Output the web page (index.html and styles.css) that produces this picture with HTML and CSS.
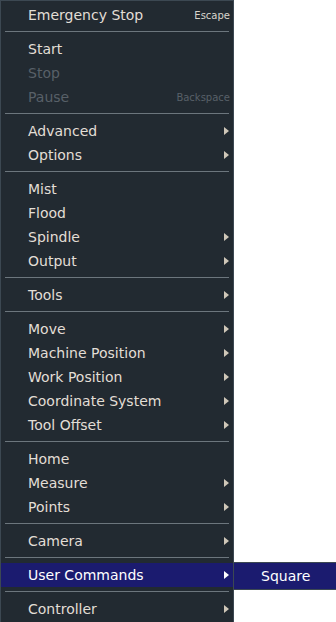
FILE: index.html
```html
<!DOCTYPE html>
<html lang="en">
<head>
    <meta charset="UTF-8">
    <title>Machine Menu</title>
    <link rel="stylesheet" href="styles.css">
</head>
<body>
    <div class="menu">
        <div class="item">Emergency Stop<span class="shortcut">Escape</span></div>
        <div class="sep"></div>

        <div class="item">Start</div>
        <div class="item disabled">Stop</div>
        <div class="item disabled">Pause<span class="shortcut">Backspace</span></div>
        <div class="sep"></div>

        <div class="item sub">Advanced</div>
        <div class="item sub">Options</div>
        <div class="sep"></div>

        <div class="item">Mist</div>
        <div class="item">Flood</div>
        <div class="item sub">Spindle</div>
        <div class="item sub">Output</div>
        <div class="sep"></div>

        <div class="item sub">Tools</div>
        <div class="sep"></div>

        <div class="item sub">Move</div>
        <div class="item sub">Machine Position</div>
        <div class="item sub">Work Position</div>
        <div class="item sub">Coordinate System</div>
        <div class="item sub">Tool Offset</div>
        <div class="sep"></div>

        <div class="item">Home</div>
        <div class="item sub">Measure</div>
        <div class="item sub">Points</div>
        <div class="sep"></div>

        <div class="item sub">Camera</div>
        <div class="sep"></div>

        <div class="item sub active">User Commands
            <div class="submenu">
                <div class="submenu-item">Square</div>
            </div>
        </div>
        <div class="sep"></div>

        <div class="item sub">Controller</div>
    </div>
</body>
</html>
```

FILE: styles.css
```css
:root {
    --menu-bg: #222a31;
    --menu-border: #3c4852;
    --text: #e2ded6;
    --disabled: #586068;
    --sep: #6c767d;
    --highlight: #1b1b6f;
    --arrow: #cfc7b8;
}

* {
    box-sizing: border-box;
    margin: 0;
    padding: 0;
}

body {
    background: #ffffff;
    font-family: 'DejaVu Sans', Verdana, sans-serif;
    font-size: 14px;
    width: 336px;
    height: 622px;
    overflow: hidden;
}

.menu {
    width: 234px;
    background: var(--menu-bg);
    border: 1px solid var(--menu-border);
    border-bottom: none;
    padding-top: 2px;
    padding-bottom: 4px;
}

.item {
    position: relative;
    display: flex;
    align-items: center;
    height: 24px;
    padding-left: 27px;
    color: var(--text);
    white-space: nowrap;
}

.item.disabled {
    color: var(--disabled);
}

.shortcut {
    margin-left: auto;
    margin-right: 3px;
    font-size: 10px;
    color: #d8d4cc;
}

.disabled .shortcut {
    color: var(--disabled);
}

.item.sub::after {
    content: '';
    position: absolute;
    right: 4px;
    top: 8px;
    border-top: 4px solid transparent;
    border-bottom: 4px solid transparent;
    border-left: 5px solid var(--arrow);
}

.item.active {
    background: var(--highlight);
    color: #ffffff;
}

.item.active::after {
    border-left-color: #ffffff;
}

.sep {
    height: 10px;
    display: flex;
    align-items: center;
    padding: 0 4px;
}

.sep::before {
    content: '';
    flex: 1;
    height: 1px;
    margin-top: -1px;
    background: var(--sep);
}

.submenu {
    position: absolute;
    left: 232px;
    top: -1px;
    width: 104px;
    background: var(--highlight);
    border: 1px solid var(--menu-border);
    padding: 2px 0;
}

.submenu-item {
    height: 22px;
    line-height: 22px;
    padding-left: 27px;
    color: #ffffff;
}
```
